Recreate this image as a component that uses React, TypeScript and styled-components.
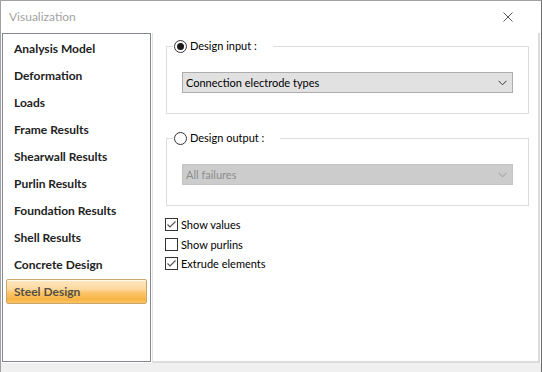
import React from 'react';
import styled, { createGlobalStyle } from 'styled-components';

const GlobalStyle = createGlobalStyle`
  html, body { margin: 0; padding: 0; background: #fff; }
  body { font-family: "Segoe UI", Lato, "Noto Sans", sans-serif; }
`;

const Window = styled.div`
  width: 542px;
  height: 372px;
  box-sizing: border-box;
  border-top: 1px solid #a0a0a0;
  border-left: 1px solid #a0a0a0;
  border-right: 1px solid #6e6e6e;
  background: #fff;
  display: flex;
  flex-direction: column;
  overflow: hidden;
`;

const TitleBar = styled.div`
  height: 31px;
  flex: none;
  display: flex;
  align-items: center;
  justify-content: space-between;
  padding: 0 28px 1px 8px;
  color: #a3a3a3;
  font-family: Lato, sans-serif;
  font-size: 12px;
`;

const CloseButton = styled.svg`
  width: 10px;
  height: 10px;
`;

const Body = styled.div`
  flex: none;
  height: 330px;
  display: flex;
  gap: 1px;
  padding-left: 1px;
  background: #fff;
`;

const NavList = styled.div`
  width: 149px;
  height: 329px;
  box-sizing: border-box;
  border: 1px solid #828790;
  padding: 2px 3px 0;
  display: flex;
  flex-direction: column;
`;

const NavItem = styled.div<{ $active?: boolean }>`
  height: 25px;
  margin-bottom: 2px;
  box-sizing: border-box;
  display: flex;
  align-items: center;
  padding-left: 7px;
  font-family: Lato, sans-serif;
  font-weight: 700;
  font-size: 12px;
  color: ${p => (p.$active ? '#55503f' : '#222')};
  border-radius: 2px;
  border: 1px solid ${p => (p.$active ? '#c9a86a' : 'transparent')};
  background: ${p =>
    p.$active
      ? 'linear-gradient(#fee7c2 0%, #fdd89e 40%, #fbc56c 55%, #f9b444 85%, #fbc466 100%)'
      : 'transparent'};
  box-shadow: ${p => (p.$active ? 'inset 0 1px 0 rgba(255,255,255,0.7)' : 'none')};
`;

const Content = styled.div`
  width: 388px;
  height: 330px;
  box-sizing: border-box;
  border-right: 2px solid #dcdcdc;
  border-bottom: 2px solid #dcdcdc;
  border-left: 1px solid #e3e3e3;
  padding: 6px 9px 0 13px;
  display: flex;
  flex-direction: column;
  font-family: Lato, sans-serif;
  font-size: 11px;
  color: #000;
`;

const GroupBox = styled.fieldset<{ $after: number }>`
  margin: 0 0 ${p => p.$after}px;
  padding: 19px 15px 20px 15px;
  border: 1px solid #dcdcdc;
  border-radius: 0;
  min-width: 0;
  width: 363px;
  box-sizing: border-box;
`;

const Legend = styled.legend`
  padding: 0 16px 0 1px;
  margin-left: -9px;
  display: flex;
  align-items: center;
  gap: 3px;
  line-height: 14px;
`;

const Radio = styled.span<{ $checked?: boolean }>`
  width: 13px;
  height: 13px;
  box-sizing: border-box;
  border-radius: 50%;
  border: 1px solid #333;
  display: inline-flex;
  align-items: center;
  justify-content: center;
  &::after {
    content: '';
    width: 7px;
    height: 7px;
    border-radius: 50%;
    background: ${p => (p.$checked ? '#1a1a1a' : 'transparent')};
  }
`;

const Select = styled.div<{ $disabled?: boolean }>`
  height: 21px;
  box-sizing: border-box;
  border: 1px solid ${p => (p.$disabled ? '#c4c4c4' : '#adadad')};
  background: ${p => (p.$disabled ? '#cccccc' : '#e1e1e1')};
  color: ${p => (p.$disabled ? '#8d8d8d' : '#000')};
  display: flex;
  align-items: center;
  justify-content: space-between;
  padding: 0 5px 0 3px;
`;

const Chevron = styled.svg`
  width: 9px;
  height: 6px;
`;

const CheckRow = styled.label`
  display: flex;
  align-items: center;
  gap: 3px;
  height: 19.5px;
  margin-left: -1px;
`;

const CheckBox = styled.span`
  width: 13px;
  height: 13px;
  box-sizing: border-box;
  border: 1px solid #333;
  background: #fff;
  display: inline-flex;
  align-items: center;
  justify-content: center;
`;

const Footer = styled.div`
  flex: 1;
  background: #f0f0f0;
`;

const navItems = [
  'Analysis Model',
  'Deformation',
  'Loads',
  'Frame Results',
  'Shearwall Results',
  'Purlin Results',
  'Foundation Results',
  'Shell Results',
  'Concrete Design',
  'Steel Design',
];

const ChevronIcon = ({ color }: { color: string }) => (
  <Chevron viewBox="0 0 9 6">
    <path d="M0.5 0.8 L4.5 4.8 L8.5 0.8" fill="none" stroke={color} strokeWidth="1" />
  </Chevron>
);

const Check = ({ checked, label }: { checked?: boolean; label: string }) => (
  <CheckRow>
    <CheckBox>
      {checked && (
        <svg width="11" height="11" viewBox="0 0 11 11">
          <path d="M1.5 5.5 L4 8 L9.5 2.5" fill="none" stroke="#555" strokeWidth="1.2" />
        </svg>
      )}
    </CheckBox>
    {label}
  </CheckRow>
);

export default function App() {
  return (
    <>
      <GlobalStyle />
      <Window>
        <TitleBar>
          <span>Visualization</span>
          <CloseButton viewBox="0 0 10 10">
            <path d="M0.5 0.5 L9.5 9.5 M9.5 0.5 L0.5 9.5" stroke="#555" strokeWidth="1" />
          </CloseButton>
        </TitleBar>
        <Body>
          <NavList>
            {navItems.map(item => (
              <NavItem key={item} $active={item === 'Steel Design'}>
                {item}
              </NavItem>
            ))}
          </NavList>
          <Content>
            <GroupBox $after={17}>
              <Legend>
                <Radio $checked />
                Design input :
              </Legend>
              <Select>
                <span>Connection electrode types</span>
                <ChevronIcon color="#333" />
              </Select>
            </GroupBox>
            <GroupBox $after={9}>
              <Legend>
                <Radio />
                Design output :
              </Legend>
              <Select $disabled>
                <span>All failures</span>
                <ChevronIcon color="#9a9a9a" />
              </Select>
            </GroupBox>
            <Check checked label="Show values" />
            <Check label="Show purlins" />
            <Check checked label="Extrude elements" />
          </Content>
        </Body>
        <Footer />
      </Window>
    </>
  );
}
